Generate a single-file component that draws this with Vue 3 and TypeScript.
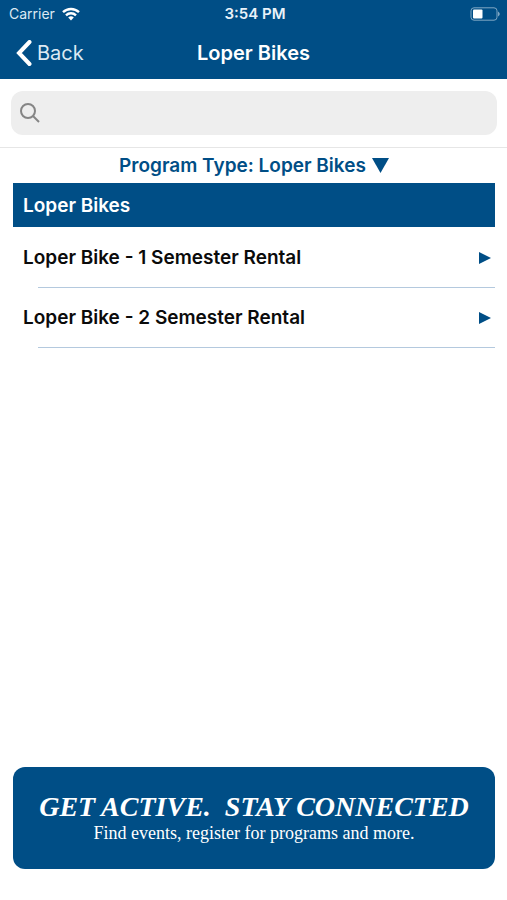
<script setup lang="ts">
import { ref, computed } from 'vue'

interface Program {
  id: number
  name: string
}

const query = ref('')
const programType = ref('Loper Bikes')
const programs: Program[] = [
  { id: 1, name: 'Loper Bike - 1 Semester Rental' },
  { id: 2, name: 'Loper Bike - 2 Semester Rental' },
]
const visiblePrograms = computed(() =>
  programs.filter((p) => p.name.toLowerCase().includes(query.value.toLowerCase())),
)
</script>

<template>
  <div class="app">
    <header class="header">
      <div class="status">
        <div class="carrier">
          <span>Carrier</span>
          <svg class="wifi" viewBox="0 0 18 14" aria-hidden="true">
            <path d="M1 5.2a11.6 11.6 0 0 1 16 0" />
            <path d="M4 8.3a7.2 7.2 0 0 1 10 0" />
            <path class="dot" d="M9 13.4 6.2 10.6a4 4 0 0 1 5.6 0z" />
          </svg>
        </div>
        <span class="time">3:54 PM</span>
        <svg class="battery" viewBox="0 0 31 14" aria-hidden="true">
          <rect class="shell" x="1" y="0.8" width="26" height="12.4" rx="3" />
          <rect class="charge" x="3" y="2.5" width="9.5" height="9" rx="1" />
          <path class="cap" d="M28 4.5q3.600 2.500 0 5z" />
        </svg>
      </div>
      <nav class="nav">
        <button class="back" type="button">
          <svg viewBox="0 0 16 26" aria-hidden="true"><path d="M13.500 2 3 13l10.500 11" /></svg>
          <span>Back</span>
        </button>
        <h1 class="title">Loper Bikes</h1>
      </nav>
    </header>

    <div class="search">
      <label class="field">
        <svg viewBox="0 0 20 20" aria-hidden="true">
          <circle cx="8" cy="8" r="7" />
          <path d="m13 13 6 6" />
        </svg>
        <input v-model="query" type="search" aria-label="Search programs" />
      </label>
    </div>

    <main class="content">
      <button class="filter" type="button">
        <span>Program Type: {{ programType }}</span>
        <svg viewBox="0 0 17 15" aria-hidden="true"><path d="M0 0h17L8.500 15z" /></svg>
      </button>
      <h2 class="section">{{ programType }}</h2>
      <ul class="list">
        <li v-for="program in visiblePrograms" :key="program.id">
          <a class="row" href="#">
            <span>{{ program.name }}</span>
            <svg viewBox="0 0 12 12" aria-hidden="true"><path d="M0 0 12 6 0 12z" /></svg>
          </a>
        </li>
      </ul>
    </main>

    <footer class="banner">
      <p class="slogan">GET ACTIVE.&nbsp; STAY CONNECTED</p>
      <p class="tagline">Find events, register for programs and more.</p>
    </footer>
  </div>
</template>

<style>
body {
  margin: 0;
  background: #fff;
}
</style>

<style scoped>
.app {
  --blue: #004e86;
  display: flex;
  flex-direction: column;
  box-sizing: border-box;
  min-height: 100vh;
  padding-bottom: 31px;
  font-family: Inter, sans-serif;
  color: #0b0b0b;
}
button {
  padding: 0;
  border: 0;
  background: none;
  font: inherit;
  color: inherit;
  cursor: pointer;
}
svg {
  flex: none;
}
.header {
  box-sizing: border-box;
  height: 79px;
  background: var(--blue);
  color: #fff;
}
.status {
  display: grid;
  grid-template-columns: 1fr auto 1fr;
  align-items: center;
  height: 27px;
  padding: 0 6px 0 9px;
  font-size: 14px;
}
.carrier {
  display: flex;
  align-items: center;
  gap: 7px;
  color: #dce9f3;
}
.wifi {
  width: 18px;
  height: 14px;
  fill: none;
  stroke: #fff;
  stroke-width: 2.4;
}
.wifi .dot {
  fill: #fff;
  stroke: none;
}
.time {
  font-size: 15px;
  font-weight: 600;
  color: #e9f2f9;
}
.battery {
  justify-self: end;
  width: 31px;
  height: 14px;
}
.shell {
  fill: none;
  stroke: #7fa7c4;
}
.charge {
  fill: #fff;
}
.cap {
  fill: #7fa7c4;
}
.nav {
  display: grid;
  grid-template-columns: 1fr auto 1fr;
  align-items: center;
  height: 52px;
  padding: 0 16px;
}
.back {
  display: flex;
  align-items: center;
  justify-self: start;
  gap: 5px;
  font-size: 20px;
  color: #dce9f3;
}
.back svg {
  width: 16px;
  height: 26px;
  fill: none;
  stroke: #fff;
  stroke-linecap: round;
  stroke-width: 4;
}
.title {
  margin: 0;
  font-size: 20px;
  font-weight: 600;
}
.search {
  padding: 12px 10px 12px 11px;
  border-bottom: 1px solid #e6e6e6;
}
.field {
  display: flex;
  align-items: center;
  gap: 10px;
  height: 44px;
  padding: 0 9px;
  border-radius: 12px;
  background: #eee;
}
.field svg {
  width: 20px;
  height: 20px;
  fill: none;
  stroke: #858585;
  stroke-width: 2;
}
.field input {
  flex: 1;
  min-width: 0;
  padding: 0;
  border: 0;
  outline: 0;
  background: none;
  font: inherit;
  font-size: 18px;
}
.content {
  padding: 0 12px 0 13px;
}
.filter {
  display: flex;
  align-items: center;
  justify-content: center;
  gap: 6px;
  width: 100%;
  height: 34px;
  margin-bottom: 1px;
  font-size: 19px;
  font-weight: 600;
  color: var(--blue);
}
.filter svg {
  width: 17px;
  height: 15px;
  fill: var(--blue);
}
.section {
  margin: 0;
  padding: 1px 10px 0;
  background: var(--blue);
  font-size: 19px;
  font-weight: 600;
  line-height: 43px;
  color: #fff;
}
.list {
  margin: 0;
  padding: 1px 0 0;
  list-style: none;
}
.row {
  display: flex;
  align-items: center;
  justify-content: space-between;
  height: 59px;
  padding: 0 4px 0 10px;
  font-size: 19px;
  font-weight: 600;
  color: inherit;
  text-decoration: none;
}
.row svg {
  width: 12px;
  height: 12px;
  fill: var(--blue);
}
.list li::after {
  content: '';
  display: block;
  height: 1px;
  margin-left: 25px;
  background: #b4c9de;
}
.banner {
  display: flex;
  flex-direction: column;
  justify-content: center;
  box-sizing: border-box;
  min-height: 102px;
  margin: auto 12px 0 13px;
  padding-bottom: 2px;
  border-radius: 12px;
  background: var(--blue);
  font-family: 'Liberation Serif', serif;
  color: #fff;
  text-align: center;
}
.banner p {
  margin: 0;
}
.slogan {
  font-size: 28px;
  font-style: italic;
  font-weight: 700;
  line-height: 32px;
}
.tagline {
  font-size: 18px;
  line-height: 20px;
}
</style>
